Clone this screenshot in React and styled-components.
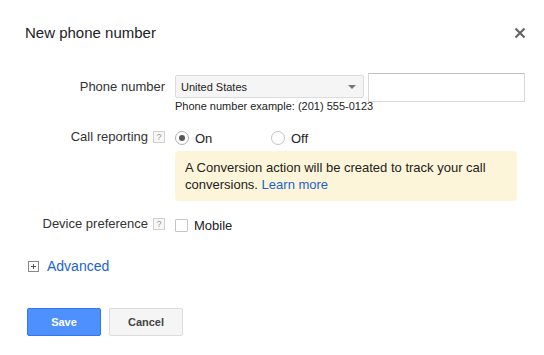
import React from 'react';
import styled, { createGlobalStyle } from 'styled-components';

const GlobalStyle = createGlobalStyle`
  body {
    margin: 0;
    background: #fff;
    font-family: "Liberation Sans", Arial, sans-serif;
    color: #333;
  }
`;

const Dialog = styled.div`
  width: 544px;
  height: 355px;
  box-sizing: border-box;
  padding: 24px 18px 0 25px;
`;

const Header = styled.div`
  display: flex;
  justify-content: space-between;
  align-items: center;
  height: 18px;
`;

const Title = styled.h1`
  margin: 0;
  font-size: 15px;
  line-height: 18px;
  font-weight: 400;
  color: #222;
`;

const Close = styled.button`
  border: 0;
  background: none;
  padding: 0;
  width: 12px;
  height: 12px;
  display: flex;
  cursor: pointer;
`;

const Form = styled.div`
  display: flex;
  flex-direction: column;
  margin-top: 31px;
`;

const Row = styled.div`
  display: flex;
  align-items: flex-start;
  margin-top: ${(p) => p.gap || 0}px;
`;

const LabelCell = styled.div`
  width: 140px;
  flex: none;
  display: flex;
  justify-content: flex-end;
  align-items: center;
  gap: 5px;
  padding-top: ${(p) => p.offset || 0}px;
  margin-right: 10px;
`;

const Label = styled.span`
  font-size: 13px;
  line-height: 16px;
  color: #333;
`;

const Help = styled.span`
  width: 10px;
  height: 10px;
  border: 1px solid #cfcfcf;
  background: #f7f7f7;
  color: #999;
  font-size: 9px;
  line-height: 10px;
  text-align: center;
`;

const Field = styled.div`
  flex: 1;
  display: flex;
  flex-direction: column;
`;

const PhoneLine = styled.div`
  display: flex;
  align-items: flex-start;
  gap: 4px;
`;

const SelectWrap = styled.div`
  width: 189px;
  flex: none;
  display: flex;
  flex-direction: column;
`;

const Select = styled.div`
  margin-top: 2px;
  width: 189px;
  height: 23px;
  box-sizing: border-box;
  border: 1px solid #dcdcdc;
  border-radius: 2px;
  background: #f5f5f5;
  display: flex;
  align-items: center;
  justify-content: space-between;
  padding: 0 7px 0 5px;
  font-size: 11px;
  color: #222;
`;

const Arrow = styled.span`
  width: 0;
  height: 0;
  border-left: 4px solid transparent;
  border-right: 4px solid transparent;
  border-top: 4px solid #777;
`;

const Hint = styled.div`
  margin-top: 2px;
  font-size: 11px;
  line-height: 13px;
  color: #222;
  white-space: nowrap;
`;

const Input = styled.input`
  width: 157px;
  height: 29px;
  box-sizing: border-box;
  border: 1px solid #d9d9d9;
  border-top-color: #c0c0c0;
  padding: 0 6px;
  font: inherit;
  outline: none;
`;

const Options = styled.div`
  display: flex;
  align-items: center;
  height: 18px;
`;

const Option = styled.label`
  display: flex;
  align-items: center;
  gap: 6px;
  width: ${(p) => p.w || 'auto'};
  font-size: 13px;
  color: #222;
`;

const Radio = styled.span`
  width: 12px;
  height: 12px;
  border-radius: 50%;
  border: 1px solid ${(p) => (p.checked ? '#b0b0b0' : '#c4c4c4')};
  display: flex;
  align-items: center;
  justify-content: center;
  &::after {
    content: '';
    width: 6px;
    height: 6px;
    border-radius: 50%;
    background: ${(p) => (p.checked ? '#555' : 'transparent')};
  }
`;

const Check = styled.span`
  width: 11px;
  height: 11px;
  border: 1px solid #c6c6c6;
  border-radius: 1px;
  background: #fff;
`;

const Notice = styled.div`
  margin-top: 4px;
  width: 342px;
  box-sizing: border-box;
  background: #fdf5d9;
  border-radius: 4px;
  padding: 8px 10px;
  font-size: 13px;
  line-height: 17px;
  color: #222;
`;

const Link = styled.a`
  color: #1a63d1;
  text-decoration: none;
  cursor: pointer;
`;

const Advanced = styled.div`
  display: flex;
  align-items: center;
  gap: 8px;
  margin-top: 23px;
  margin-left: 3px;
  font-size: 14px;
  line-height: 18px;
`;

const PlusBox = styled.span`
  width: 9px;
  height: 9px;
  border: 1px solid #888;
  position: relative;
  &::before,
  &::after {
    content: '';
    position: absolute;
    background: #555;
  }
  &::before {
    left: 2px;
    top: 4px;
    width: 5px;
    height: 1px;
  }
  &::after {
    left: 4px;
    top: 2px;
    width: 1px;
    height: 5px;
  }
`;

const Actions = styled.div`
  display: flex;
  gap: 8px;
  margin-top: 33px;
  margin-left: 2px;
`;

const Button = styled.button`
  width: ${(p) => p.w}px;
  height: 28px;
  box-sizing: border-box;
  border-radius: 2px;
  border: 1px solid ${(p) => (p.primary ? '#3079ed' : '#dcdcdc')};
  background: ${(p) => (p.primary ? '#4d90fe' : '#f5f5f5')};
  color: ${(p) => (p.primary ? '#fff' : '#444')};
  font-family: "Liberation Sans", Arial, sans-serif;
  font-size: 11px;
  font-weight: 700;
  cursor: pointer;
`;

const App = () => {
  return (
    <Dialog>
      <GlobalStyle />
      <Header>
        <Title>New phone number</Title>
        <Close aria-label="Close">
          <svg width="12" height="12" viewBox="0 0 12 12">
            <path d="M1.5 1.5 L10.5 10.5 M10.5 1.5 L1.5 10.5" stroke="#666" strokeWidth="2.2" />
          </svg>
        </Close>
      </Header>

      <Form>
        <Row>
          <LabelCell offset={6}>
            <Label>Phone number</Label>
          </LabelCell>
          <PhoneLine>
            <SelectWrap>
              <Select>
                United States
                <Arrow />
              </Select>
              <Hint>Phone number example: (201) 555-0123</Hint>
            </SelectWrap>
            <Input type="text" />
          </PhoneLine>
        </Row>

        <Row gap={16}>
          <LabelCell>
            <Label>Call reporting</Label>
            <Help>?</Help>
          </LabelCell>
          <Field>
            <Options>
              <Option w="96px">
                <Radio checked />
                On
              </Option>
              <Option>
                <Radio />
                Off
              </Option>
            </Options>
            <Notice>
              A Conversion action will be created to track your call conversions.{' '}
              <Link>Learn more</Link>
            </Notice>
          </Field>
        </Row>

        <Row gap={15}>
          <LabelCell>
            <Label>Device preference</Label>
            <Help>?</Help>
          </LabelCell>
          <Options>
            <Option>
              <Check />
              Mobile
            </Option>
          </Options>
        </Row>

        <Advanced>
          <PlusBox />
          <Link>Advanced</Link>
        </Advanced>

        <Actions>
          <Button primary w={74}>Save</Button>
          <Button w={74}>Cancel</Button>
        </Actions>
      </Form>
    </Dialog>
  );
};

export default App;
